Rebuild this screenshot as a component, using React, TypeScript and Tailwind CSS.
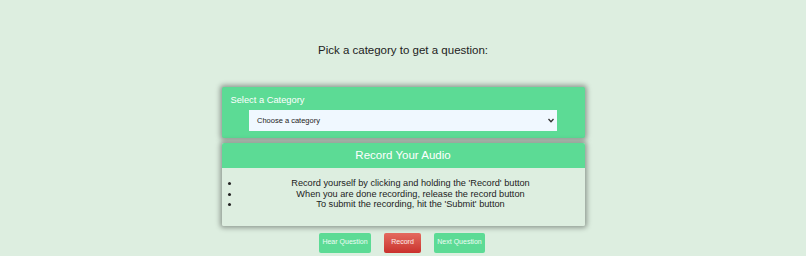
import React from "react";

export default function App() {
  return (
    <div className="w-[806px] h-[256px] overflow-hidden bg-[#ddeee0] flex flex-col items-center" style={{ fontFamily: '"Liberation Sans", Arial, sans-serif' }}>
      <div className="mt-[43px] text-[11.5px] text-[#222] leading-[15px]">Pick a category to get a question:</div>
      <div className="mt-[29px] w-[363px] bg-[#5cdb95] shadow-[0_0_5px_2px_rgba(0,0,0,0.35)] rounded-[2px] px-[9px] pt-[7px] pb-[7px]">
        <div className="text-white text-[9.3px] leading-[12px]">Select a Category</div>
        <div className="mt-[4px] flex justify-center">
          <div className="w-[308px] h-[21px] bg-[#f0f8ff] flex items-center justify-between pl-[8px] pr-[3px] text-[7.5px] text-[#222]">
            <span>Choose a category</span>
            <svg width="6" height="5" viewBox="0 0 6 5"><path d="M0.5 1 L3 3.8 L5.5 1" stroke="#333" strokeWidth="1.3" fill="none" /></svg>
          </div>
        </div>
      </div>
      <div className="mt-[5px] w-[363px] shadow-[0_0_5px_2px_rgba(0,0,0,0.35)] rounded-[2px] overflow-hidden">
        <div className="h-[25px] bg-[#5cdb95] text-white text-[11.5px] flex items-center justify-center">Record Your Audio</div>
        <ul className="bg-[#ddeee0] list-disc pl-[18px] pr-[3px] pt-[10px] pb-[16px] text-[9.2px] leading-[10.5px] text-[#222] text-center">
          <li>Record yourself by clicking and holding the 'Record' button</li>
          <li>When you are done recording, release the record button</li>
          <li>To submit the recording, hit the 'Submit' button</li>
        </ul>
      </div>
      <div className="mt-[7px] flex gap-[13px] -translate-x-[1px]">
        <button className="h-[20px] w-[52px] bg-[#5cdb95] text-white/90 text-[7px] rounded-[2px]">Hear Question</button>
        <button className="h-[20px] w-[37px] bg-gradient-to-b from-[#e46a5f] to-[#c9302c] text-white/90 text-[7px] rounded-[2px]">Record</button>
        <button className="h-[20px] w-[51px] bg-[#5cdb95] text-white/90 text-[7px] rounded-[2px]">Next Question</button>
      </div>
    </div>
  );
}
